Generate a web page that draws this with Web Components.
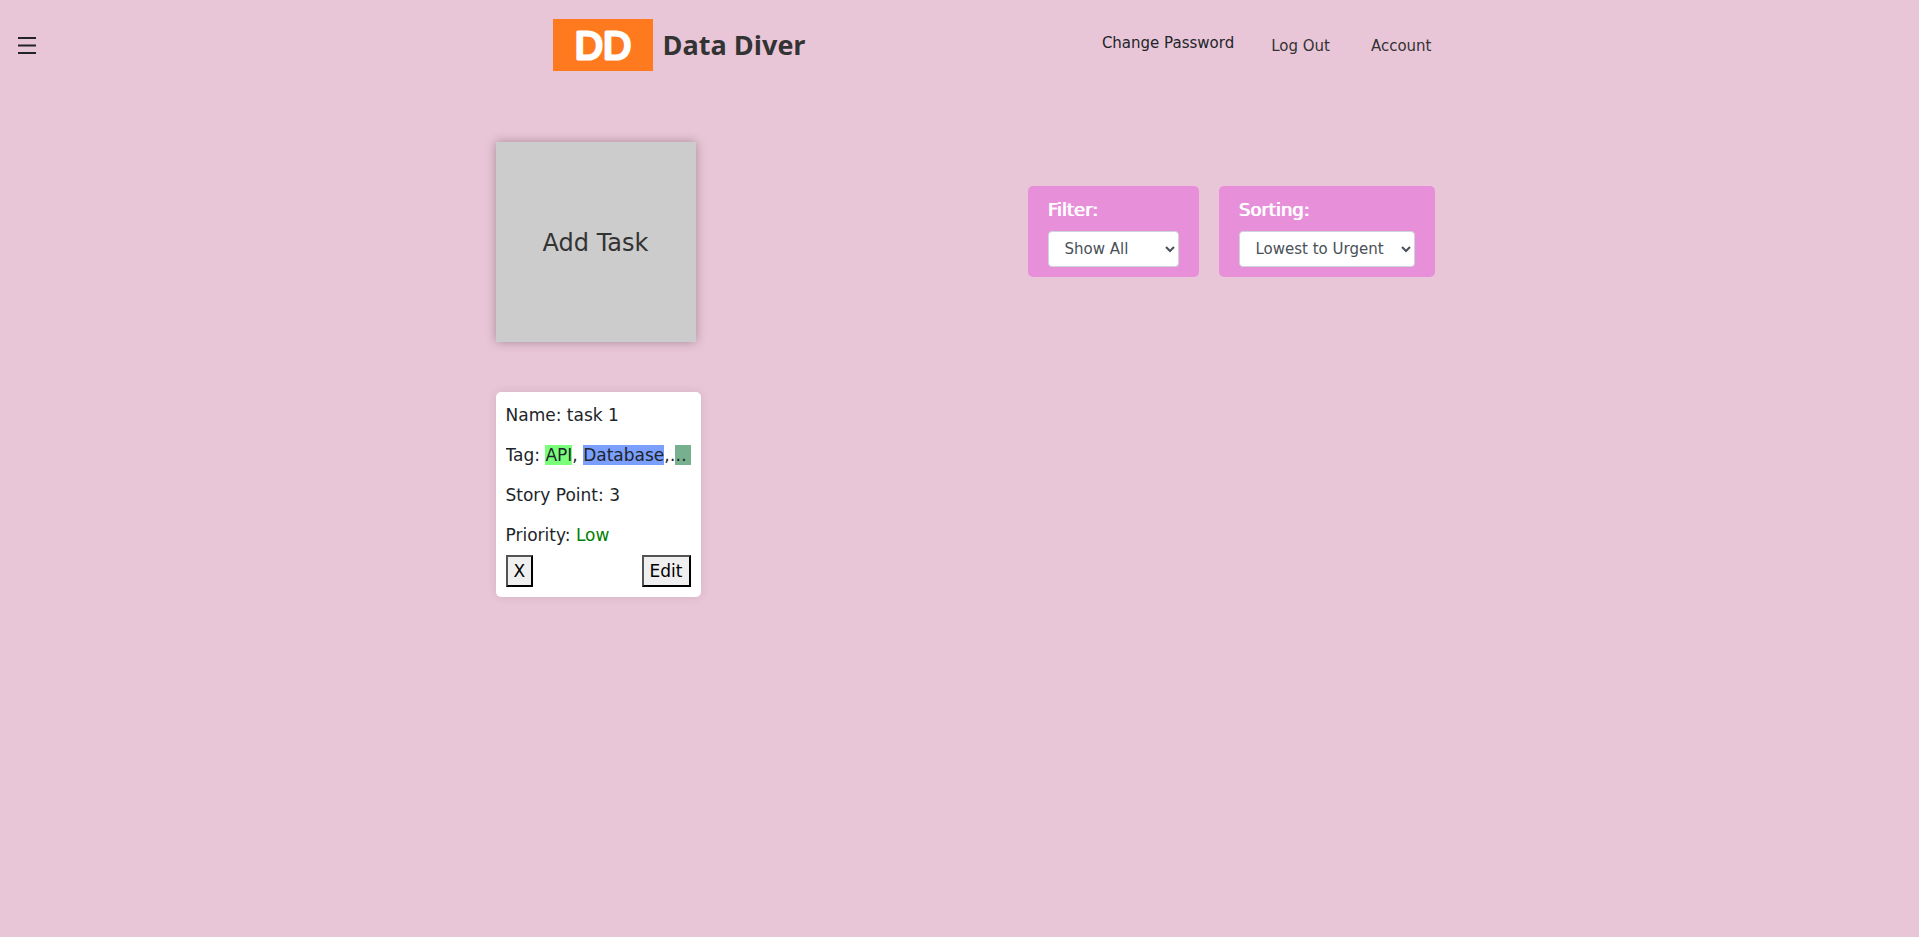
<!DOCTYPE html>
<html lang="en">
<head>
<meta charset="utf-8">
<meta name="viewport" content="width=device-width, initial-scale=1">
<title>Data Diver</title>
<style>
body { margin: 0; min-height: 100vh; background: #e9c6d7; color: #212529; font-family: "DejaVu Sans", Verdana, sans-serif; }
</style>
</head>
<body>
<data-diver-app></data-diver-app>
<script>
const define = (name, html, setup) => customElements.define(name, class extends HTMLElement {
  constructor() {
    super();
    this.attachShadow({ mode: 'open' }).innerHTML = html;
    if (setup) setup(this, this.shadowRoot);
  }
});

define('menu-button', `
<style>
:host { display: block; }
button { display: block; padding: 0; border: 0; background: none; color: #212529; cursor: pointer; }
svg { display: block; }
</style>
<button type="button" aria-label="Open menu">
  <svg width="18" height="18" viewBox="0 0 18 18" fill="currentColor"><path d="M0 1h18v2H0zM0 8.5h18v2H0zM0 16h18v2H0z"/></svg>
</button>`);

define('brand-logo', `
<style>
:host { display: flex; align-items: center; gap: 10px; font-family: "Open Sans", "Segoe UI", sans-serif; }
svg { display: block; }
span { font-size: 27px; line-height: 42px; font-weight: 700; color: #333; white-space: nowrap; }
text { font: 39px "Liberation Sans", Arial, sans-serif; fill: #fff; stroke: #fff; stroke-width: 3; stroke-linejoin: round; }
</style>
<svg width="100" height="52" viewBox="0 0 100 52" role="img" aria-label="DD">
  <rect width="100" height="52" fill="#ff7a1f"/>
  <text x="50" y="40" text-anchor="middle">DD</text>
</svg>
<span><slot></slot></span>`);

define('site-header', `
<style>
:host { display: grid; grid-template-columns: 1fr minmax(0, 950px) 1fr; align-items: center; height: 90px; }
menu-button { margin-left: 18px; }
.bar { display: flex; align-items: center; justify-content: space-between; padding: 0 3px 0 68px; }
nav { display: flex; align-items: center; padding-top: 2px; }
a { color: #333; font-size: 15px; line-height: 22px; text-decoration: none; white-space: nowrap; }
.password { padding-bottom: 6px; margin-right: 37px; color: #212529; }
.logout { margin-right: 41px; }
</style>
<menu-button></menu-button>
<div class="bar">
  <brand-logo>Data Diver</brand-logo>
  <nav>
    <a class="password" href="#password">Change Password</a>
    <a class="logout" href="#logout">Log Out</a>
    <a href="#account">Account</a>
  </nav>
</div>`);

define('add-task', `
<style>
:host { display: block; }
button { display: block; width: 200px; height: 200px; padding: 2px 0 0; border: 0; background: #ccc; color: #333;
  font: 24px "DejaVu Sans", Verdana, sans-serif; box-shadow: 0 0 10px rgba(0,0,0,.3); cursor: pointer; }
</style>
<button type="button"><slot></slot></button>`);

define('option-panel', `
<style>
:host { display: block; padding: 10px 20px; border-radius: 5px; background: #e88fda; }
label { display: block; margin-bottom: 8px; color: #fff; font-size: 18px; line-height: 27px; text-shadow: 1px 0 0 #fff; }
select { display: block; box-sizing: border-box; width: var(--select-width); height: 36px; padding: 0 0 0 12px;
  border: 1px solid #ced4da; border-radius: 4px; background: #fff; color: #495057; font: 15px "DejaVu Sans", Verdana, sans-serif; }
</style>
<label for="choice"></label>
<select id="choice"></select>`, (host, root) => {
  root.querySelector('label').textContent = host.getAttribute('label');
  root.querySelector('select').append(new Option(host.getAttribute('value')));
});

define('task-tag', `
<style>
:host { display: inline; background: var(--tag); }
</style><slot></slot>`);

define('task-card', `
<style>
:host { display: block; box-sizing: border-box; width: 205px; padding: 10px; border-radius: 5px; background: #fff;
  font-size: 17px; line-height: 27px; box-shadow: 0 0 10px rgba(0,0,0,.1); }
.rows { display: grid; gap: 13px; }
.rows div { overflow: hidden; white-space: nowrap; text-overflow: ellipsis; }
.low { color: green; }
.actions { display: flex; justify-content: space-between; margin-top: 6px; }
button { height: 32px; padding: 0 6px; border: 2px outset #000; background: #efefef; color: #000; font: 17px "DejaVu Sans", Verdana, sans-serif; }
</style>
<div class="rows">
  <div>Name: <slot name="name"></slot></div>
  <div>Tag: <task-tag style="--tag:#7aff7a">API</task-tag>, <task-tag style="--tag:#7a9fff">Database</task-tag>, <task-tag style="--tag:#77b08f">Testing</task-tag></div>
  <div>Story Point: <slot name="points"></slot></div>
  <div>Priority: <span class="low"><slot name="priority"></slot></span></div>
</div>
<div class="actions"><button type="button">X</button><button type="button">Edit</button></div>`);

define('data-diver-app', `
<style>
:host { display: block; }
main { display: flex; justify-content: space-between; align-items: flex-start; max-width: 939px; margin: 0 auto; padding: 52px 0 40px 11px; }
.tasks { display: grid; gap: 50px; justify-items: start; }
.options { display: flex; gap: 20px; margin-top: 44px; }
</style>
<site-header></site-header>
<main>
  <section class="tasks">
    <add-task>Add Task</add-task>
    <task-card><span slot="name">task 1</span><span slot="points">3</span><span slot="priority">Low</span></task-card>
  </section>
  <section class="options">
    <option-panel label="Filter:" value="Show All" style="--select-width:131px"></option-panel>
    <option-panel label="Sorting:" value="Lowest to Urgent" style="--select-width:176px"></option-panel>
  </section>
</main>`);
</script>
</body>
</html>
